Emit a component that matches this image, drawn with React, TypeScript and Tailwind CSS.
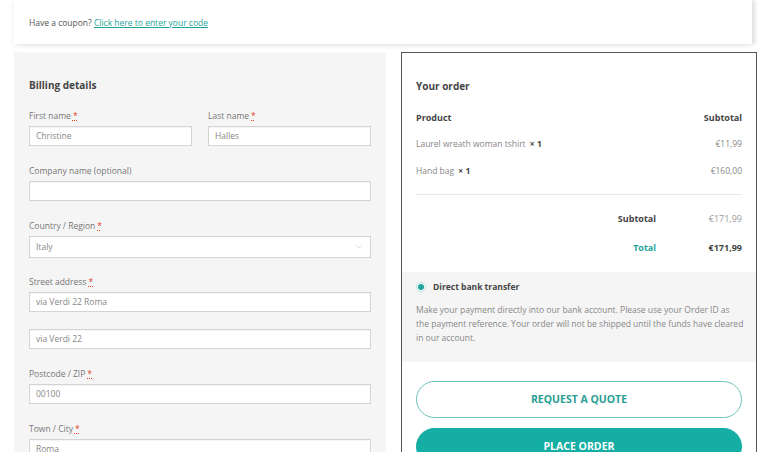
import { ChevronDown } from 'lucide-react'

const font = { fontFamily: '"Open Sans", "Liberation Sans", sans-serif' }

function Req() {
  return <span className="ml-[2px] text-[#e2401c] underline decoration-dotted">*</span>
}

function Field({ label, value, required, className = '' }: { label?: string; value?: string; required?: boolean; className?: string }) {
  return (
    <div className={className}>
      {label && (
        <p className="mb-[4px] h-[12px] text-[8.5px] leading-[12px] text-[#777]">
          {label}
          {required && <Req />}
        </p>
      )}
      <div className="flex h-[20px] items-center border border-[#d4d4d4] bg-white px-[6px] text-[8.5px] text-[#888] shadow-[inset_0_1px_1px_rgba(0,0,0,0.04)]">
        {value}
      </div>
    </div>
  )
}

export default function App() {
  return (
    <div className="h-[452px] overflow-hidden bg-white px-[14px]" style={font}>
      <div className="flex h-[44px] w-[738px] items-center bg-white px-[15px] pt-[2px] text-[8.5px] text-[#555] shadow-[0_2px_6px_rgba(0,0,0,0.08),4px_0_3px_rgba(0,0,0,0.08)]">
        Have a coupon?&nbsp;
        <span className="text-[#1fa59a] underline">Click here to enter your code</span>
      </div>

      <div className="mt-[8px] grid grid-cols-[372px_356px] gap-[15px]">
        <div className="h-[420px] bg-[#f5f5f5] px-[15px] pt-[27px]">
          <h3 className="text-[10px] font-bold leading-[12px] text-[#444]">Billing details</h3>
          <div className="mt-[19px] grid grid-cols-2 gap-[16px]">
            <Field label="First name" required value="Christine" />
            <Field label="Last name" required value="Halles" />
          </div>
          <Field className="mt-[19px]" label="Company name (optional)" />
          <div className="mt-[19px]">
            <p className="mb-[4px] h-[12px] text-[8.5px] leading-[12px] text-[#777]">
              Country / Region<Req />
            </p>
            <div className="flex h-[22px] items-center justify-between border border-[#d4d4d4] bg-white px-[6px] text-[8.5px] text-[#888]">
              Italy
              <ChevronDown className="h-[10px] w-[10px] text-[#bbb]" strokeWidth={1.5} />
            </div>
          </div>
          <Field className="mt-[18px]" label="Street address" required value="via Verdi 22 Roma" />
          <Field className="mt-[17px]" value="via Verdi 22" />
          <Field className="mt-[19px]" label="Postcode / ZIP" required value="00100" />
          <Field className="mt-[19px]" label="Town / City" required value="Roma" />
        </div>

        <div className="h-[420px] border border-[#555] bg-white">
          <div className="px-[14px] pt-[27px]">
            <h3 className="text-[10px] font-bold leading-[12px] text-[#444]">Your order</h3>
            <div className="mt-[20px] flex justify-between text-[9px] font-bold leading-[12px] text-[#444]">
              <span>Product</span>
              <span>Subtotal</span>
            </div>
            <div className="mt-[14px] flex justify-between text-[8.5px] leading-[12px] text-[#888]">
              <span>
                Laurel wreath woman tshirt <b className="ml-[2px] text-[#444]">× 1</b>
              </span>
              <span>€11,99</span>
            </div>
            <div className="mt-[15px] flex justify-between text-[8.5px] leading-[12px] text-[#888]">
              <span>
                Hand bag <b className="ml-[2px] text-[#444]">× 1</b>
              </span>
              <span>€160,00</span>
            </div>
            <div className="mt-[17px] border-t border-[#e6e6e6]" />
            <div className="mt-[18px] grid grid-cols-[1fr_86px] text-[9px] leading-[12px]">
              <span className="text-right font-bold text-[#444]">Subtotal</span>
              <span className="text-right text-[#999]">€171,99</span>
            </div>
            <div className="mt-[17px] grid grid-cols-[1fr_86px] text-[9px] leading-[12px]">
              <span className="text-right font-bold text-[#1fa59a]">Total</span>
              <span className="text-right font-bold text-[#444]">€171,99</span>
            </div>
          </div>

          <div className="mt-[18px] h-[90px] bg-[#f5f5f5] px-[14px] pt-[9px]">
            <div className="flex items-center gap-[7px] text-[8.5px] font-bold leading-[12px] text-[#444]">
              <span className="flex h-[10px] w-[10px] items-center justify-center rounded-full border border-[#b9e3df] bg-white">
                <span className="h-[6px] w-[6px] rounded-full bg-[#1fa59a]" />
              </span>
              Direct bank transfer
            </div>
            <p className="mt-[10px] whitespace-nowrap text-[8.5px] leading-[14px] text-[#888]">
              Make your payment directly into our bank account. Please use your Order ID as
              <br />
              the payment reference. Your order will not be shipped until the funds have cleared
              <br />
              in our account.
            </p>
          </div>

          <div className="px-[14px] pt-[19px]">
            <div className="flex h-[37px] items-center justify-center rounded-full border border-[#6cc4bc] text-[10.5px] font-bold text-[#2a9e94]">
              REQUEST A QUOTE
            </div>
            <div className="mt-[10px] flex h-[37px] items-center justify-center rounded-full bg-[#14aea4] text-[10.5px] font-bold text-white">
              PLACE ORDER
            </div>
          </div>
        </div>
      </div>
    </div>
  )
}
